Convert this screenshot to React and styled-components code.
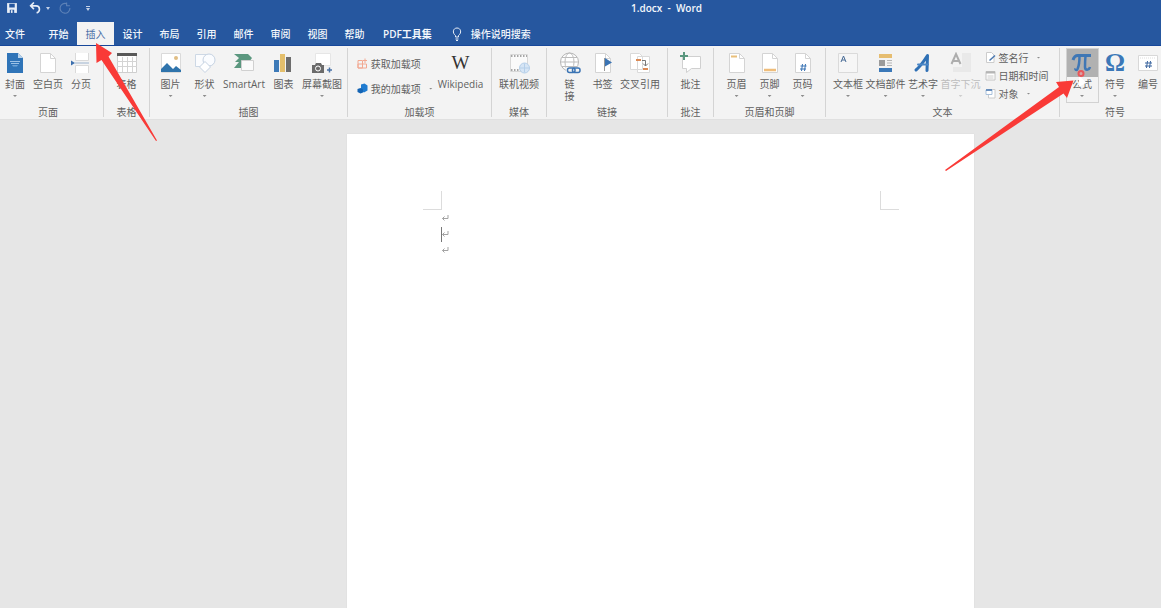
import React from 'react';
import styled, { createGlobalStyle, css } from 'styled-components';

const GlobalStyle = createGlobalStyle`
  * {
    box-sizing: border-box;
  }
  body {
    margin: 0;
    overflow: hidden;
    background: #e6e6e6;
    font-family: 'Open Sans', 'Noto Sans CJK SC', sans-serif;
    font-size: 10px;
    line-height: 12px;
    color: #5f5f5f;
  }
  button {
    font: inherit;
    color: inherit;
    background: none;
    border: 0;
    padding: 0;
    cursor: pointer;
  }
`;

const Window = styled.div`
  position: relative;
  min-height: 100vh;
  overflow: hidden;
  display: flex;
  flex-direction: column;
`;

const Header = styled.header`
  background: #26579f;
  color: #f4f7fc;
  border-bottom: 1px solid #17479a;
`;

const TitleBar = styled.div`
  display: grid;
  grid-template-columns: 1fr auto 1fr;
  align-items: center;
  height: 16px;
  padding: 0 6px;
`;

const QuickAccess = styled.div`
  display: flex;
  align-items: center;
  gap: 5px;
`;

const QuickButton = styled.button`
  display: flex;
  align-items: center;
  margin-right: ${({ $space }) => $space || 0}px;
  opacity: ${({ disabled }) => (disabled ? 0.25 : 1)};
`;

const Title = styled.h1`
  margin: 0 0 0 172px;
  font-size: 10px;
  line-height: 14px;
  font-weight: 600;
  white-space: pre;
`;

const TabBar = styled.nav`
  display: flex;
  align-items: stretch;
  height: 29px;
  padding-top: 6px;
`;

const Tab = styled.button`
  flex: 0 0 auto;
  min-width: 37px;
  padding: 0;
  font-weight: 500;
  white-space: nowrap;

  ${({ $file }) =>
    $file &&
    css`
      padding-left: 5px;
      margin-right: 10px;
      min-width: 30px;
      text-align: left;
    `}
  ${({ $wide }) =>
    $wide &&
    css`
      padding: 0 10px;
      font-weight: 600;
    `}
  ${({ $active }) =>
    $active &&
    css`
      background: #f3f3f3;
      color: #4a6fa8;
      font-weight: 400;
    `}
`;

const TellMe = styled.button`
  display: flex;
  align-items: center;
  gap: 9px;
  padding: 0 10px;
  font-weight: 500;
`;

const Ribbon = styled.div`
  display: flex;
  height: 74px;
  margin-left: -7px;
  padding: 2px 0;
  background: #f3f3f3;
  border-bottom: 1px solid #e0e0e0;
`;

const Group = styled.section`
  flex: 0 0 auto;
  display: flex;
  flex-direction: column;
  min-width: ${({ $min }) => $min || 46}px;
  padding: 0 4px;
  border-right: 1px solid #d4d4d4;

  &:last-child {
    border-right: 0;
  }
`;

const Tools = styled.div`
  flex: 1;
  display: flex;
  justify-content: center;
  align-items: flex-start;
  gap: ${({ $gap }) => $gap || 0}px;
`;

const GroupName = styled.h2`
  margin: 0;
  font-size: 10px;
  font-weight: 400;
  line-height: 10px;
  text-align: center;
`;

const Arrow = styled.span`
  width: 4px;
  height: 2px;
  margin-top: 5px;
  background: currentColor;
  opacity: 0.7;
  clip-path: polygon(0 0, 100% 0, 50% 100%);
`;

const ToolButton = styled.button`
  display: flex;
  flex-direction: column;
  align-items: center;
  min-width: 33px;
  height: 55px;
  padding: 0 1px;
  white-space: nowrap;
  color: ${({ disabled }) => (disabled ? '#bdbdbd' : 'inherit')};

  ${({ $pressed }) =>
    $pressed &&
    css`
      background: linear-gradient(#b1b1b1 29px, #f3f3f3 29px);
      box-shadow: inset 0 0 0 1px #d2d2d2;
    `}
`;

const ToolIcon = styled.span`
  display: flex;
  align-items: center;
  justify-content: center;
  height: 30px;
`;

const ToolLabel = styled.span`
  line-height: 12px;
`;

const Glyph = styled.span`
  font-family: 'Liberation Serif', serif;
  font-size: ${({ $size }) => $size}px;
  font-weight: ${({ $bold }) => ($bold ? 700 : 400)};
  line-height: 22px;
  color: ${({ $color }) => $color};
`;

const SmallTools = styled.div`
  display: flex;
  flex-direction: column;
  align-items: flex-start;
  gap: ${({ $loose }) => ($loose ? 12 : 5)}px;
  padding: ${({ $loose }) => ($loose ? '9px 4px 0 2px' : '3px 5px 0 3px')};
`;

const SmallButton = styled.button`
  display: flex;
  align-items: center;
  gap: 3px;
  height: 13px;
  white-space: nowrap;

  ${Arrow} {
    margin: 0 0 0 5px;
  }
`;

const Workspace = styled.main`
  flex: 1;
  display: grid;
  grid-template-columns: 347fr 627fr 187fr;
  padding-top: 14px;
`;

const Page = styled.article`
  grid-column: 2;
  padding: 57px 75px 0 76px;
  background: #fff;
  box-shadow: 0 0 1px #d0d0d0;
`;

const Margins = styled.div`
  display: flex;
  justify-content: space-between;
`;

const Corner = styled.span`
  width: 19px;
  height: 19px;
  border: solid #dcdcdc;
  border-width: ${({ $right }) => ($right ? '0 0 1px 1px' : '0 1px 1px 0')};
`;

const Paragraph = styled.p`
  display: flex;
  align-items: center;
  height: 16px;
  margin: 0;
  padding-left: 18px;
`;

const Caret = styled.span`
  width: 1px;
  height: 15px;
  margin-right: -1px;
  background: #777;
`;

const Pointer = styled.svg`
  position: absolute;
  left: ${({ $x }) => $x}px;
  top: ${({ $y }) => $y}px;
  fill: #f93a37;
  pointer-events: none;
`;

const Icon = ({ size = 22, children }) => (
  <svg width={size} height={size} viewBox="0 0 22 22" fill="none" aria-hidden="true">
    {children}
  </svg>
);

const Sheet = ({ children }) => (
  <Icon>
    <path d="M3.500 1.500h10l5 5v14h-15z" fill="#fff" stroke="#d4d4d4" />
    <path d="M13.500 1.500v5h5" stroke="#d4d4d4" />
    {children}
  </Icon>
);

const icons = {
  cover: (
    <Icon>
      <path d="M3 1h11l5 5v15H3z" fill="#2f74b8" />
      <path d="M14 1v5h5z" fill="#b9d3ec" />
      <path d="M6 9.500h10M7 11.500h8" stroke="#9cc2e6" />
      <path d="M8 13h6l-1 1.500H9z" fill="#6fa4d6" />
    </Icon>
  ),
  blank: <Sheet />,
  pageBreak: (
    <Icon>
      <path d="M5.500 1v7.500h13V1M5.500 21v-7.500h13V21" fill="#fff" stroke="#dadada" />
      <path d="M5 11h14" stroke="#9db4cf" />
      <path d="M1 8.500l4 2.500-4 2.500z" fill="#3c6fae" />
    </Icon>
  ),
  table: (
    <Icon>
      <path d="M1.500 2.500h19v18h-19z" fill="#fff" stroke="#cfcfcf" />
      <path d="M1 1h20v3H1z" fill="#595959" />
      <path d="M1 9.500h20M1 14.500h20M6.500 5v15M11.500 5v15M16.500 5v15" stroke="#d4d4d4" />
    </Icon>
  ),
  picture: (
    <Icon>
      <path d="M1.500 1.500h19v19h-19z" fill="#fff" stroke="#dadada" />
      <circle cx="16" cy="6" r="2" fill="#e0bd84" />
      <path d="M1 20v-3l6-6 6 6 3-3 5 4v2z" fill="#2f74ac" />
    </Icon>
  ),
  shapes: (
    <Icon>
      <path d="M1.500 2.500h12v12h-12z" fill="#fbfcfe" stroke="#cdd8e5" />
      <circle cx="15" cy="8" r="6" fill="#fafcff" stroke="#c5d2e2" />
      <path d="M11 9.500l5.500 5.500-5.500 5.500L5.500 15z" fill="#fff" stroke="#c5d2e2" />
    </Icon>
  ),
  smartArt: (
    <Icon>
      <path d="M1 2h14l4 4-3 4H2l4-4z" fill="#5b977f" />
      <path d="M1 16l5-6h3v6z" fill="#5b977f" />
      <path d="M8.500 8.500h12v10h-12z" fill="#fafafa" stroke="#d0d0d0" />
    </Icon>
  ),
  chart: (
    <Icon>
      <path d="M2 8h5v12H2z" fill="#3d7ab8" />
      <path d="M8 2h5v18H8z" fill="#e4bf6c" />
      <path d="M14 5h5v15h-5z" fill="#6d6d6d" />
    </Icon>
  ),
  screenshot: (
    <Icon>
      <path d="M4.500 1.500h15v12h-15z" fill="#fff" stroke="#e6e6e6" />
      <path d="M1 13h3l1-2h5l1 2h2v8H1z" fill="#6b6b6b" />
      <circle cx="7" cy="16.500" r="2.500" stroke="#fff" />
      <path d="M18.500 15.500v5M16 18h5" stroke="#4a72a6" strokeWidth="1.500" />
    </Icon>
  ),
  video: (
    <Icon>
      <path d="M2.500 2.500h17v17h-17z" fill="#fafafa" stroke="#d8d8d8" />
      <path d="M3 4h16M3 18h10" stroke="#8c8c8c" strokeWidth="1.500" strokeDasharray="1.500 1.500" />
      <circle cx="16.500" cy="16" r="5" fill="#d6e5f5" stroke="#b5cfe9" />
      <path d="M12 16h9M16.500 11.500v9" stroke="#b5cfe9" />
    </Icon>
  ),
  link: (
    <Icon>
      <circle cx="10.500" cy="10" r="9" fill="#fff" stroke="#b5b5b5" />
      <ellipse cx="10.500" cy="10" rx="4.500" ry="9" stroke="#bdbdbd" />
      <path d="M1.500 10h18M3 5.500h15M3 14.500h15" stroke="#bdbdbd" />
      <path d="M7 15h15v7H7z" fill="#f3f3f3" />
      <rect x="8.500" y="16" width="7.500" height="4.500" rx="2" stroke="#3b74b4" strokeWidth="1.500" />
      <rect x="13.500" y="16" width="7.500" height="4.500" rx="2" stroke="#3b74b4" strokeWidth="1.500" />
    </Icon>
  ),
  bookmark: (
    <Sheet>
      <path d="M13 6l7 4.500-7 4z" fill="#3b74b4" />
      <path d="M12.500 6v13" stroke="#999" />
    </Sheet>
  ),
  crossRef: (
    <Icon>
      <path d="M1.500 1.500h9l3 3v13h-12zM8.500 4.500h12v16h-12z" fill="#fff" stroke="#dadada" />
      <path d="M7 8h5M14 17h5" stroke="#dc8a55" strokeWidth="2" />
      <path d="M13 8.500h3.500V14M14 11.500l2.500 2.500 2.500-2.500" stroke="#777" />
    </Icon>
  ),
  comment: (
    <Icon>
      <path d="M2.500 4.500h18v12h-9l-5 4v-4h-4z" fill="#fff" stroke="#d0d0d0" />
      <path d="M4 0v8M0 4h8" stroke="#5a977f" strokeWidth="2" />
    </Icon>
  ),
  pageHeader: (
    <Sheet>
      <path d="M5 4.500h6" stroke="#e9bf7a" strokeWidth="2" />
    </Sheet>
  ),
  pageFooter: (
    <Sheet>
      <path d="M5 18h12" stroke="#efbd7b" strokeWidth="2.500" />
    </Sheet>
  ),
  pageNumber: (
    <Sheet>
      <path d="M10.500 12l-1 7M13.500 12l-1 7M8.500 14h6M8 17h6" stroke="#3b74b4" />
    </Sheet>
  ),
  textBox: (
    <Icon>
      <path d="M1.500 1.500h19v19h-19z" fill="#f6f6f6" stroke="#dadada" />
      <path d="M4 10l2.500-6L9 10M5 8h3" stroke="#476a95" />
    </Icon>
  ),
  parts: (
    <Icon>
      <path d="M4 2h13v4H4z" fill="#e6bd70" />
      <path d="M4 8h6v6H4z" fill="#9b9b9b" />
      <path d="M12 8.500h5M12 11h5M12 13.500h5" stroke="#b5b5b5" />
      <path d="M4 16h13v4H4z" fill="#3b78b8" />
    </Icon>
  ),
  wordArt: (
    <Icon>
      <path
        d="M4 18C9 14 12 9 15.500 3.500L15 18.500"
        stroke="#2f70b5"
        strokeWidth="3"
        strokeLinecap="round"
        strokeLinejoin="round"
      />
      <path d="M6 12.500h10" stroke="#4a86c6" strokeWidth="2" strokeLinecap="round" />
    </Icon>
  ),
  dropCap: (
    <Icon>
      <path d="M12 1h9v19H3v-5h9z" fill="#e9e9e9" />
      <path d="M1.500 12L6 2l4.500 10M3 9h6" stroke="#adadad" strokeWidth="2" />
    </Icon>
  ),
  equation: (
    <Icon>
      <path d="M2 8C3 4.500 4.500 3.500 7 3.500h13" stroke="#3f77b5" strokeWidth="3" />
      <path
        d="M8.500 4c0 6-.5 10-2 13-.5 1.500-2.500 1-2-.5M14.500 4c-.5 5-.5 8-.5 11 0 3.500 4 3.500 5 0"
        stroke="#3f77b5"
        strokeWidth="2.500"
      />
    </Icon>
  ),
  number: (
    <Icon>
      <path d="M1.500 3.500h19v15h-19z" fill="#fff" stroke="#d8d8d8" />
      <path d="M3 6h16" stroke="#ddd" strokeDasharray="1 1" />
      <path d="M10.500 9l-1 7M13.500 9l-1 7M8 11h7M8 14h7" stroke="#3a659e" />
    </Icon>
  ),
  store: (
    <Icon size={11}>
      <path d="M2 5h9v15H2zM2 12h17v8H2zM11 12v8M16 1v9M12 5h8" stroke="#f2a891" strokeWidth="2" />
    </Icon>
  ),
  addins: (
    <Icon size={11}>
      <path d="M8 3l7-2 6 4v10l-7 4-6-3z" fill="#1f7bd0" />
      <path d="M1 12l6-2 5 3v6l-5 2-6-3z" fill="#1464b4" />
    </Icon>
  ),
  signature: (
    <Icon size={11}>
      <path d="M3 1h10l5 5v15H3z" fill="#fff" stroke="#ccc" strokeWidth="2" />
      <path d="M9 17L20 7" stroke="#4a78b0" strokeWidth="3" />
    </Icon>
  ),
  date: (
    <Icon size={11}>
      <path d="M2 3h18v17H2z" fill="#fff" stroke="#c4c4c4" strokeWidth="2" />
      <path d="M2 5h18" stroke="#b5b5b5" strokeWidth="4" />
      <path d="M5 12h12M5 16h12" stroke="#ccc" strokeWidth="2" />
    </Icon>
  ),
  object: (
    <Icon size={11}>
      <path d="M7 3h13v17H7z" fill="#fff" stroke="#ccc" strokeWidth="2" />
      <path d="M2 4h12v9H2z" fill="#fff" stroke="#a9c1dc" strokeWidth="2" />
      <path d="M2 4h12" stroke="#4a78b0" strokeWidth="3" />
    </Icon>
  ),
};

const Tool = ({ icon, label, menu, ...rest }) => (
  <ToolButton type="button" {...rest}>
    <ToolIcon>{icons[icon] || icon}</ToolIcon>
    <ToolLabel>{label}</ToolLabel>
    {menu && <Arrow />}
  </ToolButton>
);

const SmallTool = ({ icon, label, menu }) => (
  <SmallButton type="button">
    {icons[icon]}
    <span>{label}</span>
    {menu && <Arrow />}
  </SmallButton>
);

const RibbonGroup = ({ name, min, gap, children }) => (
  <Group $min={min} aria-label={name}>
    <Tools $gap={gap}>{children}</Tools>
    <GroupName>{name}</GroupName>
  </Group>
);

const ReturnMark = () => (
  <svg width="8" height="8" viewBox="0 0 8 8" fill="none" stroke="#a3a3a3" aria-hidden="true">
    <path d="M7 1v3.500H1.500M3.500 2.500l-2 2 2 2" />
  </svg>
);

const tabs = ['开始', '插入', '设计', '布局', '引用', '邮件', '审阅', '视图', '帮助'];

export default function App() {
  return (
    <Window>
      <GlobalStyle />
      <Header>
        <TitleBar>
          <QuickAccess>
            <QuickButton type="button" aria-label="保存" $space={6}>
              <Icon size={12}>
                <path d="M2 2h18v18H2z" fill="#e8eef7" />
                <path d="M6 3h10v7H6zM7 14h8v6H7z" fill="#26579f" />
                <path d="M9 15h3v5H9z" fill="#e8eef7" />
              </Icon>
            </QuickButton>
            <QuickButton type="button" aria-label="撤消">
              <Icon size={12}>
                <path d="M4 7h9c8 0 8 11 1 13M9 1L3 7l6 6" stroke="#e8eef7" strokeWidth="3" />
              </Icon>
            </QuickButton>
            <QuickButton type="button" aria-label="撤消选项" $space={4}>
              <svg width="4" height="3" viewBox="0 0 4 3" fill="#c3d1e8" aria-hidden="true">
                <path d="M0 0h4L2 3z" />
              </svg>
            </QuickButton>
            <QuickButton type="button" aria-label="恢复" disabled $space={10}>
              <Icon size={12}>
                <path d="M14 3a9 9 0 1 0 6 8M14 1v6h6" stroke="#fff" strokeWidth="2" />
              </Icon>
            </QuickButton>
            <QuickButton type="button" aria-label="自定义快速访问工具栏">
              <svg width="4" height="5" viewBox="0 0 4 5" fill="#c3d1e8" aria-hidden="true">
                <path d="M0 0h4v1H0zM0 2h4L2 5z" />
              </svg>
            </QuickButton>
          </QuickAccess>
          <Title>1.docx  -  Word</Title>
        </TitleBar>
        <TabBar>
          <Tab type="button" $file>文件</Tab>
          {tabs.map((name) => (
            <Tab key={name} type="button" $active={name === '插入'}>
              {name}
            </Tab>
          ))}
          <Tab type="button" $wide>PDF工具集</Tab>
          <TellMe type="button">
            <svg width="10" height="14" viewBox="0 0 10 14" fill="none" stroke="#e8eef7" aria-hidden="true">
              <path d="M3.500 10V8.500C0 6 1 1 5 1s5 5 1.500 7.500V10zM3.500 12h3M4 13.500h2" />
            </svg>
            操作说明搜索
          </TellMe>
        </TabBar>
      </Header>

      <Ribbon>
        <RibbonGroup name="页面" min={111}>
          <Tool icon="cover" label="封面" menu />
          <Tool icon="blank" label="空白页" />
          <Tool icon="pageBreak" label="分页" />
        </RibbonGroup>
        <RibbonGroup name="表格">
          <Tool icon="table" label="表格" />
        </RibbonGroup>
        <RibbonGroup name="插图" min={198} gap={1}>
          <Tool icon="picture" label="图片" menu />
          <Tool icon="shapes" label="形状" menu />
          <Tool icon="smartArt" label="SmartArt" />
          <Tool icon="chart" label="图表" />
          <Tool icon="screenshot" label="屏幕截图" menu />
        </RibbonGroup>
        <RibbonGroup name="加载项" min={144}>
          <SmallTools $loose>
            <SmallTool icon="store" label="获取加载项" />
            <SmallTool icon="addins" label="我的加载项" menu />
          </SmallTools>
          <Tool icon={<Glyph $size={19} $color="#333">W</Glyph>} label="Wikipedia" />
        </RibbonGroup>
        <RibbonGroup name="媒体" min={55}>
          <Tool icon="video" label="联机视频" />
        </RibbonGroup>
        <RibbonGroup name="链接" min={121}>
          <Tool icon="link" label={<>链<br />接</>} />
          <Tool icon="bookmark" label="书签" />
          <Tool icon="crossRef" label="交叉引用" />
        </RibbonGroup>
        <RibbonGroup name="批注">
          <Tool icon="comment" label="批注" />
        </RibbonGroup>
        <RibbonGroup name="页眉和页脚" min={112}>
          <Tool icon="pageHeader" label="页眉" menu />
          <Tool icon="pageFooter" label="页脚" menu />
          <Tool icon="pageNumber" label="页码" menu />
        </RibbonGroup>
        <RibbonGroup name="文本" min={234}>
          <Tool icon="textBox" label="文本框" menu />
          <Tool icon="parts" label="文档部件" menu />
          <Tool icon="wordArt" label="艺术字" menu />
          <Tool icon="dropCap" label="首字下沉" menu disabled />
          <SmallTools>
            <SmallTool icon="signature" label="签名行" menu />
            <SmallTool icon="date" label="日期和时间" />
            <SmallTool icon="object" label="对象" menu />
          </SmallTools>
        </RibbonGroup>
        <RibbonGroup name="符号" min={110}>
          <Tool icon="equation" label="公式" menu $pressed />
          <Tool icon={<Glyph $size={25} $bold $color="#3b78b8">Ω</Glyph>} label="符号" menu />
          <Tool icon="number" label="编号" />
        </RibbonGroup>
      </Ribbon>

      <Workspace>
        <Page>
          <Margins>
            <Corner />
            <Corner $right />
          </Margins>
          <Paragraph><ReturnMark /></Paragraph>
          <Paragraph><Caret /><ReturnMark /></Paragraph>
          <Paragraph><ReturnMark /></Paragraph>
        </Page>
      </Workspace>

      <Pointer $x={94} $y={42} width="66" height="102" viewBox="94 42 66 102">
        <path d="M96 43L112 53 108.500 56.500 157 140.500 156 141 101.500 60 96.500 63z" />
      </Pointer>
      <Pointer $x={942} $y={66} width="150" height="108" viewBox="942 66 150 108">
        <path d="M1079 76l8 7-3 1-5 3z" fill="#fff" />
        <circle cx="1081" cy="73.500" r="2.500" fill="#d9a3a5" stroke="#e8575a" strokeWidth="2" />
        <path d="M1073.500 80.500L1056 82 1059 87 945 170 946 171 1063.500 93.500 1067 98z" />
      </Pointer>
    </Window>
  );
}
